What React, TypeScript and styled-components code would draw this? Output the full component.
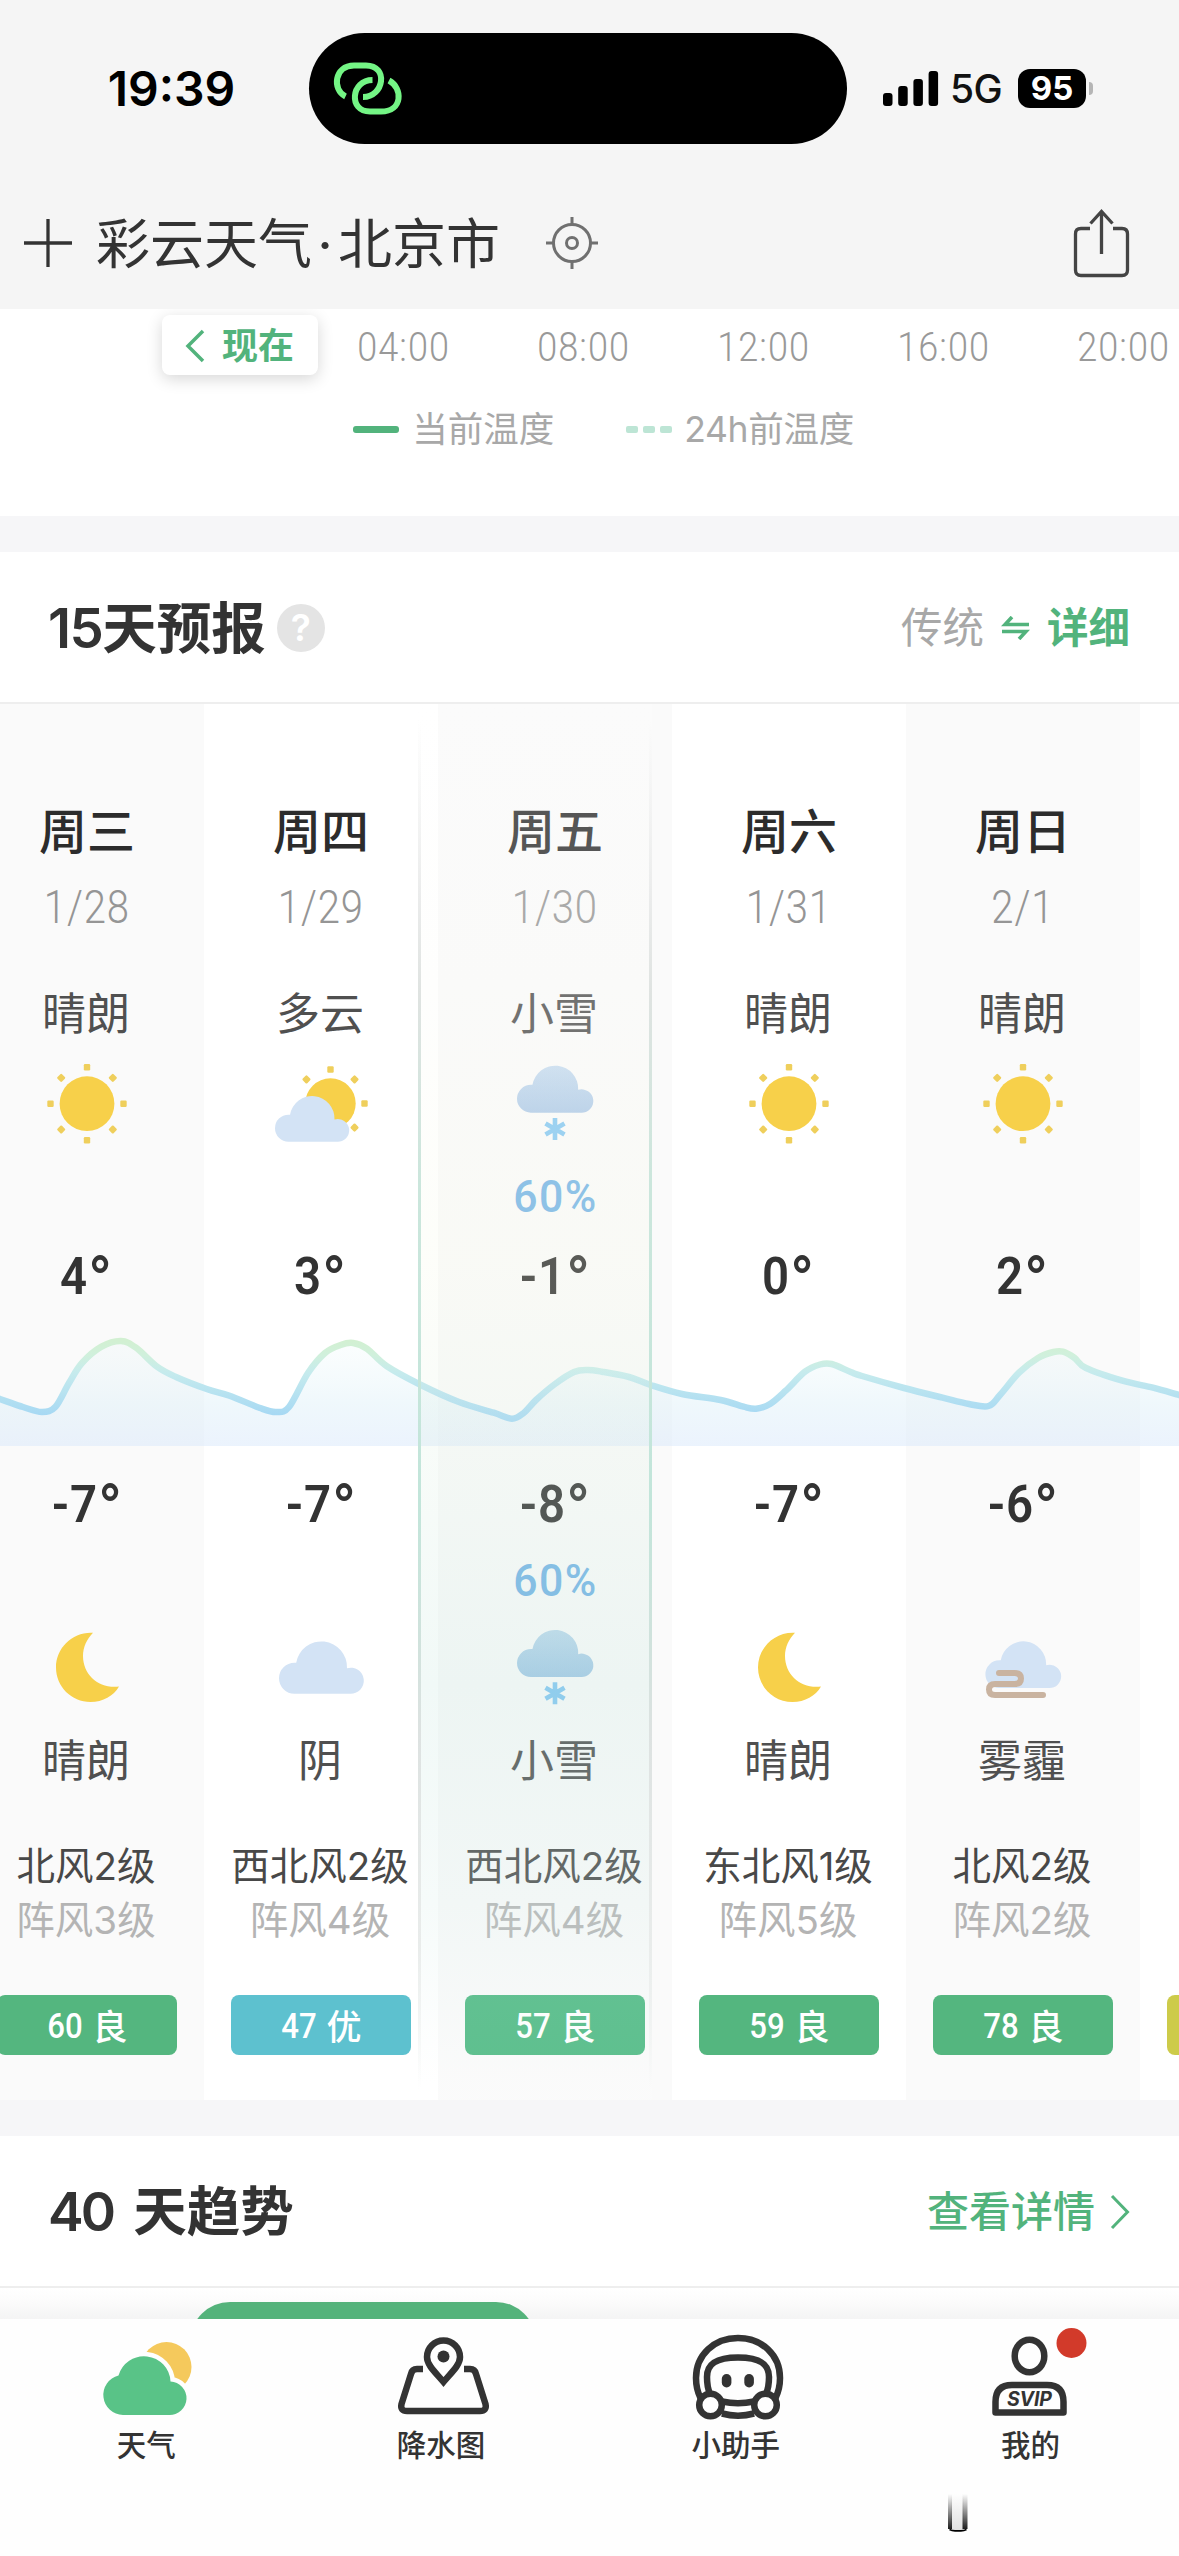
import React from "react";
import styled, { createGlobalStyle } from "styled-components";

const GREEN = "#52b37c";
const INK = "#333333";

const GlobalStyle = createGlobalStyle`
  * { box-sizing: border-box; }
  body {
    margin: 0;
    background: #ffffff;
    font-family: Inter, "Noto Sans CJK SC", sans-serif;
    color: ${INK};
  }
  svg { display: block; flex: none; }
`;

const Screen = styled.div`
  width: 1179px;
  height: 2556px;
  overflow: hidden;
  display: flex;
  flex-direction: column;
  background: #ffffff;
`;

/* ---------- status bar and title ---------- */

const TopArea = styled.header`
  background: #f5f5f5;
  height: 309px;
  flex: none;
`;

const StatusBar = styled.div`
  height: 177px;
  display: flex;
  align-items: center;
`;

const Clock = styled.div`
  width: 309px;
  padding-left: 34px;
  text-align: center;
  font-size: 48px;
  font-weight: 600;
  line-height: 56px;
  color: #000;
`;

const Island = styled.div`
  width: 538px;
  height: 111px;
  border-radius: 56px;
  background: #000;
  display: flex;
  align-items: center;
  padding-left: 23px;
`;

const StatusRight = styled.div`
  flex: 1;
  padding-left: 36px;
  display: flex;
  align-items: center;
`;

const Network = styled.span`
  margin-left: 11px;
  width: 68px;
  font-size: 39px;
  line-height: 50px;
  font-weight: 500;
  color: #111;
  letter-spacing: -0.5px;
`;

const Battery = styled.span`
  width: 68px;
  height: 39px;
  border-radius: 12px;
  background: #000;
  color: #fff;
  font-size: 33px;
  line-height: 39px;
  font-weight: 700;
  text-align: center;
`;

const BatteryNub = styled.span`
  width: 4px;
  height: 13px;
  margin-left: 3px;
  border-radius: 0 5px 5px 0;
  background: #b5b5b5;
`;

const TitleBar = styled.div`
  height: 132px;
  display: flex;
  align-items: center;
  padding: 0 48px 0 22px;
`;

const City = styled.h1`
  margin: 0 42px 0 22px;
  padding-top: 3px;
  display: flex;
  font-size: 54px;
  line-height: 64px;
  font-weight: 400;
`;

const Dot = styled.span`
  width: 26px;
  text-align: center;
`;

const Push = styled.div`
  margin-left: auto;
`;

/* ---------- hourly strip ---------- */

const Hourly = styled.section`
  height: 207px;
  flex: none;
  background: #fff;
  padding-top: 6px;
  overflow: hidden;
`;

const HourRow = styled.div`
  display: flex;
  padding-left: 162px;
  height: 60px;
  width: 1240px;
`;

const NowButton = styled.button`
  width: 156px;
  height: 60px;
  border: 0;
  border-radius: 8px;
  background: #fff;
  box-shadow: 0 4px 16px rgba(0, 0, 0, 0.16);
  padding: 2px 0 0 23px;
  display: flex;
  align-items: center;
  gap: 17px;
  font: 700 36px/58px Inter, "Noto Sans CJK SC", sans-serif;
  color: ${GREEN};
  margin-right: -4px;
`;

const Narrow = styled.span<{ $scale?: number; $track?: number }>`
  display: inline-block;
  font-family: Roboto, sans-serif;
  letter-spacing: ${(p) => p.$track ?? 0}px;
  transform: scaleX(${(p) => p.$scale ?? 0.87});
`;

const Hour = styled.div`
  width: 180px;
  padding-top: 1px;
  text-align: center;
  font-size: 40px;
  line-height: 62px;
  font-weight: 300;
  color: #999999;
`;

const Legend = styled.div`
  display: flex;
  justify-content: center;
  gap: 72px;
  padding-left: 28px;
  margin-top: 30px;
`;

const LegendItem = styled.div`
  display: flex;
  align-items: center;
  gap: 13px;
  font-size: 35.5px;
  line-height: 49px;
  color: #a8a8a8;
`;

const LegendWide = styled(LegendItem)`
  gap: 12px;
  letter-spacing: -0.3px;
`;

const SolidMark = styled.i`
  width: 46px;
  height: 7px;
  border-radius: 3px;
  background: ${GREEN};
`;

const DashMark = styled.i`
  width: 46px;
  height: 7px;
  display: flex;
  justify-content: space-between;
  &::before,
  &::after,
  span {
    content: "";
    width: 12px;
    border-radius: 2px;
    background: #bde5d5;
  }
`;

const Gap = styled.div`
  height: 36px;
  flex: none;
  background: #f6f6f8;
`;

/* ---------- section heading ---------- */

const SectionHead = styled.div`
  height: 152px;
  flex: none;
  padding: 2px 49px 0 48px;
  display: flex;
  align-items: center;
  border-bottom: 2px solid #eeeeee;
  background: #fff;
`;

const SectionTitle = styled.h2<{ $space?: number; $size: number; $track: number }>`
  margin: 0;
  display: flex;
  gap: ${(p) => p.$space ?? 0}px;
  font-size: ${(p) => p.$size}px;
  line-height: 64px;
  font-weight: 600;
  span { letter-spacing: ${(p) => p.$track}px; }
`;

const Help = styled.span`
  width: 48px;
  height: 48px;
  margin-left: 11px;
  border-radius: 50%;
  background: #e4e4e4;
  color: #fff;
  font-size: 37px;
  font-weight: 600;
  line-height: 48px;
  text-align: center;
`;

const ModeSwitch = styled.div`
  margin-left: auto;
  display: flex;
  align-items: center;
  gap: 17px;
  font-size: 41.5px;
  line-height: 57px;
  color: #a8a8a8;
  b { font-weight: 700; color: ${GREEN}; }
`;

const MoreLink = styled.a`
  margin-left: auto;
  display: flex;
  align-items: center;
  gap: 15px;
  font-size: 42px;
  line-height: 58px;
  font-weight: 500;
  color: ${GREEN};
`;

/* ---------- 15 day forecast ---------- */

const Forecast = styled.section`
  position: relative;
  height: 1396px;
  flex: none;
  overflow: hidden;
`;

const Columns = styled.div`
  display: flex;
  width: 1404px;
  margin-left: -30px;
`;

const Column = styled.div<{ $shade: boolean }>`
  width: 234px;
  height: 1396px;
  flex: none;
  padding-top: 96px;
  text-align: center;
  white-space: nowrap;
  background: ${(p) => (p.$shade ? "#fafafa" : "#ffffff")};
`;

const Weekday = styled.div`
  font-size: 48px;
  line-height: 64px;
  font-weight: 500;
  height: 62px;
  color: #2c2c2c;
`;

const DateText = styled.div`
  height: 90px;
  font-size: 45.5px;
  line-height: 90px;
  font-weight: 300;
  color: #959595;
`;

const Condition = styled.div<{ $top?: number }>`
  margin-top: ${(p) => p.$top ?? 0}px;
  padding-right: 2px;
  height: 62px;
  font-size: 44px;
  line-height: 63px;
  color: #505050;
`;

const IconSlot = styled.div<{ $h: number }>`
  height: ${(p) => p.$h}px;
  display: flex;
  justify-content: center;
`;

const Chance = styled.div<{ $h: number }>`
  height: ${(p) => p.$h}px;
  line-height: ${(p) => p.$h}px;
  font-size: 45px;
  font-weight: 500;
  color: #74b4e6;
`;

const Temp = styled.div<{ $h: number; $top?: number }>`
  margin-top: ${(p) => p.$top ?? 0}px;
  height: ${(p) => p.$h}px;
  line-height: ${(p) => p.$h}px;
  font-size: 51px;
  font-weight: 600;
`;

const Degree = styled.span`
  font-size: 68px;
  font-weight: 500;
  line-height: 0;
  vertical-align: -11px;
`;

const Wind = styled.div<{ $gust?: boolean }>`
  height: 54px;
  line-height: 55px;
  padding-right: 2px;
  font-size: 38.5px;
  color: ${(p) => (p.$gust ? "#b4b4b4" : "#484848")};
  margin-top: ${(p) => (p.$gust ? 0 : 47)}px;
`;

const Aqi = styled.div<{ $bg: string }>`
  width: 180px;
  height: 60px;
  margin: 48px auto 0;
  border-radius: 8px;
  background: ${(p) => p.$bg};
  color: #fff;
  display: flex;
  justify-content: center;
  gap: 8px;
  padding-right: 2px;
  font-size: 35px;
  line-height: 64px;
  font-weight: 500;
`;

const CurveLayer = styled.div`
  position: absolute;
  left: 0;
  top: 621px;
`;

const ScrollThumb = styled.div`
  position: absolute;
  left: 418px;
  top: 0;
  width: 234px;
  height: 1396px;
  background: linear-gradient(
    to bottom,
    rgba(255, 255, 255, 0.2) 0,
    rgba(250, 250, 245, 0.2) 280px,
    rgba(245, 249, 228, 0.2) 560px,
    rgba(215, 237, 222, 0.2) 780px,
    rgba(185, 225, 215, 0.2) 980px,
    rgba(210, 235, 230, 0.2) 1200px,
    rgba(255, 255, 255, 0.1) 1380px
  );
  display: flex;
  justify-content: space-between;
  &::before,
  &::after {
    content: "";
    width: 3px;
    background: linear-gradient(
      to bottom,
      rgba(224, 226, 225, 0) 16px,
      #ebecec 190px,
      #dfe3e1 290px,
      #cbe6dc 480px,
      #c2e5da 800px,
      #cfe2dc 930px,
      #dde2e1 1030px,
      #e9eceb 1240px,
      rgba(240, 240, 240, 0) 1386px
    );
  }
`;

const CLOUD_PATH =
  "M15.5 53A15.5 15.5 0 0 1 15.5 22Q17 22 17.2 22A25.6 25.6 0 0 1 68 27.6A13 13 0 1 1 71 53Z";

const Sun = ({ cx, cy, r, d, skip = [] }: { cx: number; cy: number; r: number; d: number; skip?: number[] }) => (
  <g>
    <circle cx={cx} cy={cy} r={r} fill="#f7d04a" />
    {[0, 1, 2, 3, 4, 5, 6, 7]
      .filter((i) => !skip.includes(i))
      .map((i) => (
        <rect
          key={i}
          x={cx - 3.2}
          y={cy - d - 3.2}
          width="6.4"
          height="6.4"
          rx="1.2"
          fill="#efcf5c"
          transform={`rotate(${i * 45} ${cx} ${cy})`}
        />
      ))}
  </g>
);

const Cloud = ({ x, y, s, fill = "#d3e3f5" }: { x: number; y: number; s: number; fill?: string }) => (
  <path d={CLOUD_PATH} transform={`translate(${x} ${y}) scale(${s})`} fill={fill} />
);

const Snow = ({ id, y, top, bottom }: { id: string; y: number; top: string; bottom: string }) => (
  <g>
    <defs>
      <linearGradient id={id} x1="0" y1="0" x2="0" y2="1">
        <stop offset="0" stopColor={top} />
        <stop offset="1" stopColor={bottom} />
      </linearGradient>
    </defs>
    <Cloud x={22} y={y} s={0.9} fill={`url(#${id})`} />
    <path
      d={`M60 ${y + 53}v22M50.5 ${y + 58.5}l19 11M69.5 ${y + 58.5}l-19 11`}
      stroke="#86c8f2"
      strokeWidth="4.6"
    />
  </g>
);

type Sky = "sun" | "partly" | "snow" | "moon" | "cloud" | "haze";

const DayIcon = ({ kind }: { kind: Sky }) => (
  <svg width="120" height="120" viewBox="0 0 120 120">
    {kind === "sun" && <Sun cx={60} cy={58.7} r={27.4} d={36.5} />}
    {kind === "partly" && (
      <>
        <Sun cx={69.5} cy={58.5} r={25.2} d={34} skip={[4, 5, 6]} />
        <Cloud x={14} y={50.4} s={0.875} />
      </>
    )}
    {kind === "snow" && <Snow id="snowDay" y={20} top="#c6dbf0" bottom="#afcae8" />}
  </svg>
);

const NightIcon = ({ kind }: { kind: Sky }) => (
  <svg width="120" height="105" viewBox="0 0 120 105">
    {kind === "moon" && (
      <path
        d="M66 7.8C46 6.500 29 22.500 29 42.500C29 61.500 44.400 77 63.500 77C76 77 86.500 71 92 61.500C72 64 56 50 56 31C56 22 60 14 66 7.800Z"
        fill="#f7d04a"
      />
    )}
    {kind === "cloud" && <Cloud x={18} y={15.7} s={1} />}
    {kind === "snow" && <Snow id="snowNight" y={4.3} top="#bdd9ec" bottom="#a4c9e6" />}
    {kind === "haze" && (
      <>
        <Cloud x={22.4} y={15.7} s={0.893} />
        <path
          d="M36 48H51.500Q58 48 58 53.500Q58 59 51.500 59H32Q26 59 26 64.500Q26 70 32 70H80"
          fill="none"
          stroke="#c9b3a0"
          strokeWidth="6"
          strokeLinecap="round"
        />
      </>
    )}
  </svg>
);

const CURVE: [number, number][] = [
  [-30, 1389], [0, 1399], [23, 1407], [42, 1412], [55.5, 1406.7], [69, 1383], [82, 1363], [101.5, 1346.7],
  [121, 1341], [136, 1347.7], [157, 1366.7], [176, 1377], [206.7, 1389], [229.6, 1395.7], [260, 1408],
  [276, 1412], [289, 1407], [308, 1373], [325, 1353], [340.6, 1345], [353, 1343], [367, 1348.7],
  [386.5, 1366], [421, 1385], [459, 1402], [493.7, 1412.7], [512, 1418.7], [524, 1412.7], [536, 1400],
  [555, 1384], [574, 1372], [587.5, 1370], [602, 1371.7], [629, 1377], [650.6, 1385], [682, 1394],
  [720.6, 1400], [743.6, 1406.7], [756, 1408.7], [770, 1404], [785.7, 1390.7], [805, 1371.7], [820, 1364.5],
  [831.6, 1364], [850.7, 1372], [862, 1376], [904, 1388], [942.6, 1397.7], [969, 1404], [988.5, 1406],
  [1000, 1395], [1019, 1372.7], [1038, 1358], [1053.5, 1352], [1063, 1351.7], [1074.6, 1358],
  [1086, 1368], [1122.5, 1380.7], [1153, 1387.7], [1179, 1395], [1210, 1404],
];

const smooth = (raw: [number, number][]) => {
  const p = raw.map(([x, y]) => [x, y - 1325]);
  let d = `M${p[0][0]} ${p[0][1]}`;
  for (let i = 0; i < p.length - 1; i++) {
    const a = p[Math.max(0, i - 1)];
    const b = p[i];
    const c = p[i + 1];
    const e = p[Math.min(p.length - 1, i + 2)];
    d += `C${b[0] + (c[0] - a[0]) / 6} ${b[1] + (c[1] - a[1]) / 6} ${c[0] - (e[0] - b[0]) / 6} ${
      c[1] - (e[1] - b[1]) / 6
    } ${c[0]} ${c[1]}`;
  }
  return d;
};

const Curve = () => {
  const line = smooth(CURVE);
  return (
    <svg width="1179" height="121" viewBox="0 0 1179 121">
      <defs>
        <linearGradient id="tempLine" gradientUnits="userSpaceOnUse" x1="0" y1="16" x2="0" y2="94">
          <stop offset="0" stopColor="#d2f0d2" />
          <stop offset="0.18" stopColor="#d0f0dc" />
          <stop offset="0.4" stopColor="#c6ebed" />
          <stop offset="1" stopColor="#a4d7f4" />
        </linearGradient>
        <linearGradient id="tempFill" gradientUnits="userSpaceOnUse" x1="0" y1="16" x2="0" y2="121">
          <stop offset="0" stopColor="#e6f6f8" stopOpacity="0.15" />
          <stop offset="0.6" stopColor="#dceff8" stopOpacity="0.45" />
          <stop offset="1" stopColor="#d9e8fb" stopOpacity="0.52" />
        </linearGradient>
      </defs>
      <path d={`${line}V121H-30Z`} fill="url(#tempFill)" />
      <path d={line} fill="none" stroke="url(#tempLine)" strokeWidth="6.500" />
    </svg>
  );
};

interface Day {
  name: string;
  date: string;
  day: string;
  dayIcon: Sky;
  chance?: string;
  high: string;
  low: string;
  nightIcon: Sky;
  night: string;
  wind: string;
  gust: string;
  aqi: string;
  level: string;
  color: string;
}

const DAYS: Day[] = [
  { name: "周三", date: "1/28", day: "晴朗", dayIcon: "sun", high: "4", low: "-7", nightIcon: "moon", night: "晴朗", wind: "北风2级", gust: "阵风3级", aqi: "60", level: "良", color: "#54b67f" },
  { name: "周四", date: "1/29", day: "多云", dayIcon: "partly", high: "3", low: "-7", nightIcon: "cloud", night: "阴", wind: "西北风2级", gust: "阵风4级", aqi: "47", level: "优", color: "#5dc1cf" },
  { name: "周五", date: "1/30", day: "小雪", dayIcon: "snow", chance: "60%", high: "-1", low: "-8", nightIcon: "snow", night: "小雪", wind: "西北风2级", gust: "阵风4级", aqi: "57", level: "良", color: "#4bb881" },
  { name: "周六", date: "1/31", day: "晴朗", dayIcon: "sun", high: "0", low: "-7", nightIcon: "moon", night: "晴朗", wind: "东北风1级", gust: "阵风5级", aqi: "59", level: "良", color: "#54b67f" },
  { name: "周日", date: "2/1", day: "晴朗", dayIcon: "sun", high: "2", low: "-6", nightIcon: "haze", night: "雾霾", wind: "北风2级", gust: "阵风2级", aqi: "78", level: "良", color: "#54b67f" },
];

const EmptyDayAqi = styled(Aqi)`
  margin-top: 1195px;
`;

/* ---------- 40 day trend ---------- */

const Trend = styled.div`
  height: 31px;
  flex: none;
  overflow: hidden;
  padding: 14px 0 0 190px;
  background: linear-gradient(to bottom, #ffffff 0, #fcfcfc 12px, #f4f4f4 31px);
`;

const TrendTab = styled.div`
  width: 346px;
  height: 80px;
  border-radius: 40px;
  background: #54b37b;
`;

/* ---------- tab bar ---------- */

const TabBar = styled.nav`
  position: relative;
  height: 237px;
  flex: none;
  display: grid;
  grid-template-columns: repeat(4, 294.75px);
  background: #fefefe;
`;

const Tab = styled.div`
  display: flex;
  flex-direction: column;
  align-items: center;
  padding-top: 9px;
`;

const TabLabel = styled.span`
  padding-right: 2px;
  font-size: 29.5px;
  line-height: 40px;
  font-weight: 500;
`;

const HomeMark = styled.div`
  position: absolute;
  left: 948px;
  bottom: 24px;
`;

const WeatherTabIcon = () => (
  <svg width="110" height="97" viewBox="0 0 110 97">
    <circle cx="74.500" cy="39" r="25" fill="#f5c95c" />
    <path
      d="M31 87A20 20 0 0 1 26.500 47.600A26.500 26.500 0 0 1 78.500 53.500A16.700 16.700 0 0 1 77 87Z"
      fill="#fefefe"
      stroke="#fefefe"
      strokeWidth="9"
    />
    <path
      d="M31 87A20 20 0 0 1 26.500 47.600A26.500 26.500 0 0 1 78.500 53.500A16.700 16.700 0 0 1 77 87Z"
      fill="#59c387"
    />
  </svg>
);

const MapTabIcon = () => (
  <svg width="110" height="97" viewBox="0 0 110 97" fill="none" stroke={INK} strokeWidth="6.500">
    <path d="M56.500 54C48 44 40 37 40 29A16.500 16.500 0 0 1 73 29C73 37 65 44 56.500 54Z" strokeLinejoin="miter" />
    <circle cx="56.500" cy="28.500" r="6" fill={INK} stroke="none" />
    <path d="M36 41H30Q25 41 24 46L14.500 76Q13 83 20 83H93Q100 83 98.500 76L89 46Q88 41 83 41H77" />
  </svg>
);

const BotTabIcon = () => (
  <svg width="110" height="97" viewBox="0 0 110 97" fill="none" stroke={INK} strokeWidth="6.500">
    <path d="M18.500 70C14 61 14 54 14 50C14 27 32 10 56 10C80 10 98 27 98 50C98 54 98 61 93.500 70" />
    <path d="M28 66C25 59 25 54 25 49C25 36 34 29.500 56 29.500C78 29.500 87 36 87 49C87 54 87 59 84 66" />
    <path d="M40 73.500Q56 77 72 73.500M40 85.500Q56 90 72 85.500" />
    <circle cx="28.500" cy="77" r="11.300" fill="#fefefe" />
    <circle cx="83.500" cy="77" r="11.300" fill="#fefefe" />
    <rect x="39.800" y="46" width="9.600" height="13.500" rx="4.800" fill={INK} stroke="none" />
    <rect x="62.300" y="46" width="9.600" height="13.500" rx="4.800" fill={INK} stroke="none" />
  </svg>
);

const MeTabIcon = () => (
  <svg width="110" height="97" viewBox="0 0 110 97" fill="none" stroke={INK} strokeWidth="6.500">
    <ellipse cx="52.500" cy="28" rx="14.800" ry="16.200" />
    <path d="M18.500 84.500V74Q18.500 57 35 57H70Q86.500 57 86.500 74V84.500Z" strokeLinejoin="round" />
    <circle cx="94.500" cy="15" r="15" fill="#d23a2a" stroke="none" />
    <text
      x="52.500"
      y="78.300"
      textAnchor="middle"
      fill={INK}
      stroke="none"
      fontFamily="Inter, sans-serif"
      fontStyle="italic"
      fontWeight="700"
      fontSize="19.500"
      textLength="45"
    >
      SVIP
    </text>
  </svg>
);

const Celsius = ({ value }: { value: string }) => (
  <Narrow $scale={0.93} $track={1}>
    {value}
    <Degree>°</Degree>
  </Narrow>
);

export default function App() {
  return (
    <Screen>
      <GlobalStyle />
      <TopArea>
        <StatusBar>
          <Clock>19:39</Clock>
          <Island>
            <svg width="72" height="58" viewBox="333 60 72 58" fill="none" stroke="#74f585" strokeWidth="6">
              <path d="M346.500 96.500C333 90 335 65.500 355 65.500H367C390 65.500 385 97 364 97" />
              <path d="M373.500 80C352 80 349 111.500 371 111.500H382C404 111.500 404 88 390 80.500" />
            </svg>
          </Island>
          <StatusRight>
            <svg width="56" height="35" viewBox="0 0 56 35">
              <rect x="0" y="22" width="9.500" height="13" rx="3" />
              <rect x="15.200" y="15" width="9.500" height="20" rx="3" />
              <rect x="30.400" y="8" width="9.500" height="27" rx="3" />
              <rect x="45.600" y="0" width="9.500" height="35" rx="3" />
            </svg>
            <Network>5G</Network>
            <Battery>95</Battery>
            <BatteryNub />
          </StatusRight>
        </StatusBar>
        <TitleBar>
          <svg width="52" height="52" viewBox="0 0 52 52" stroke={INK} strokeWidth="3.300">
            <path d="M26 2v48M2 26h48" />
          </svg>
          <City>
            <span>彩云天气</span>
            <Dot>·</Dot>
            <span>北京市</span>
          </City>
          <svg width="60" height="60" viewBox="0 0 60 60" fill="none" stroke="#707070" strokeWidth="3">
            <circle cx="30" cy="30" r="18.500" />
            <circle cx="30" cy="30" r="5.500" />
            <path d="M30 4v8M30 48v8M4 30h8M48 30h8" />
          </svg>
          <Push>
            <svg width="60" height="70" viewBox="0 0 60 70" fill="none" stroke="#444" strokeWidth="3.300">
              <path d="M19 20.500H10Q4.500 20.500 4.500 26V62Q4.500 67.500 10 67.500H51Q56.500 67.500 56.500 62V26Q56.500 20.500 51 20.500H42" />
              <path d="M30.500 46V4M19.500 15.500L30.500 3.500L41.500 15.500" />
            </svg>
          </Push>
        </TitleBar>
      </TopArea>

      <Hourly>
        <HourRow>
          <NowButton>
            <svg width="20" height="34" viewBox="0 0 20 34" fill="none" stroke={GREEN} strokeWidth="3.500">
              <path d="M18 2L3 17L18 32" />
            </svg>
            现在
          </NowButton>
          {["04:00", "08:00", "12:00", "16:00", "20:00"].map((t) => (
            <Hour key={t}>
              <Narrow $scale={0.9} $track={1.2}>{t}</Narrow>
            </Hour>
          ))}
        </HourRow>
        <Legend>
          <LegendItem>
            <SolidMark />
            当前温度
          </LegendItem>
          <LegendWide>
            <DashMark>
              <span />
            </DashMark>
            24h前温度
          </LegendWide>
        </Legend>
      </Hourly>
      <Gap />

      <SectionHead>
        <SectionTitle $size={54.5} $track={-1.5}>
          <span>15</span>天预报
        </SectionTitle>
        <Help>?</Help>
        <ModeSwitch>
          传统
          <svg width="29" height="24" viewBox="0 0 29 24" fill="none" stroke={GREEN} strokeWidth="3.600">
            <path d="M28 8.500H4L11 1M1 15.500H25L18 23" />
          </svg>
          <b>详细</b>
        </ModeSwitch>
      </SectionHead>

      <Forecast>
        <Columns>
          {DAYS.map((d, i) => (
            <Column key={d.name} $shade={i % 2 === 0}>
              <Weekday>{d.name}</Weekday>
              <DateText>
                <Narrow $scale={0.88} $track={1}>{d.date}</Narrow>
              </DateText>
              <Condition $top={31}>{d.day}</Condition>
              <IconSlot $h={120}>
                <DayIcon kind={d.dayIcon} />
              </IconSlot>
              <Chance $h={62}>
                <Narrow $scale={0.95} $track={1.5}>{d.chance}</Narrow>
              </Chance>
              <Temp $h={98}>
                <Celsius value={d.high} />
              </Temp>
              <Temp $h={62} $top={148}>
                <Celsius value={d.low} />
              </Temp>
              <Chance $h={90}>
                <Narrow $scale={0.95} $track={1.5}>{d.chance}</Narrow>
              </Chance>
              <IconSlot $h={105}>
                <NightIcon kind={d.nightIcon} />
              </IconSlot>
              <Condition>{d.night}</Condition>
              <Wind>{d.wind}</Wind>
              <Wind $gust>{d.gust}</Wind>
              <Aqi $bg={d.color}>
                <Narrow $scale={0.89}>{d.aqi}</Narrow>
                {d.level}
              </Aqi>
            </Column>
          ))}
          <Column $shade={false}>
            <EmptyDayAqi $bg="#cdcb4a" />
          </Column>
        </Columns>
        <CurveLayer>
          <Curve />
        </CurveLayer>
        <ScrollThumb />
      </Forecast>
      <Gap />

      <SectionHead>
        <SectionTitle $size={53.5} $track={-2.8} $space={20}>
          <span>40</span>天趋势
        </SectionTitle>
        <MoreLink>
          查看详情
          <svg width="20" height="36" viewBox="0 0 20 36" fill="none" stroke={GREEN} strokeWidth="3">
            <path d="M2 2L17.500 18L2 34" />
          </svg>
        </MoreLink>
      </SectionHead>
      <Trend>
        <TrendTab />
      </Trend>

      <TabBar>
        <Tab>
          <WeatherTabIcon />
          <TabLabel>天气</TabLabel>
        </Tab>
        <Tab>
          <MapTabIcon />
          <TabLabel>降水图</TabLabel>
        </Tab>
        <Tab>
          <BotTabIcon />
          <TabLabel>小助手</TabLabel>
        </Tab>
        <Tab>
          <MeTabIcon />
          <TabLabel>我的</TabLabel>
        </Tab>
        <HomeMark>
          <svg width="20" height="38" viewBox="0 0 20 38">
            <defs>
              <linearGradient id="markFade" x1="0" y1="0" x2="0" y2="1">
                <stop offset="0" stopColor="#222" stopOpacity="0" />
                <stop offset="1" stopColor="#111" stopOpacity="0.95" />
              </linearGradient>
              <linearGradient id="markCore" x1="0" y1="0" x2="0" y2="1">
                <stop offset="0" stopColor="#888" stopOpacity="0" />
                <stop offset="1" stopColor="#888" stopOpacity="0.25" />
              </linearGradient>
            </defs>
            <rect x="3" y="0" width="13" height="36" fill="url(#markCore)" />
            <rect x="0" y="0" width="4" height="35" fill="url(#markFade)" />
            <rect x="14.500" y="0" width="5" height="35" fill="url(#markFade)" />
            <path d="M1.500 35.500Q4 36.800 7 36.800H13Q16 36.800 18.500 35.500" stroke="#000" strokeWidth="1.800" fill="none" />
          </svg>
        </HomeMark>
      </TabBar>
    </Screen>
  );
}
